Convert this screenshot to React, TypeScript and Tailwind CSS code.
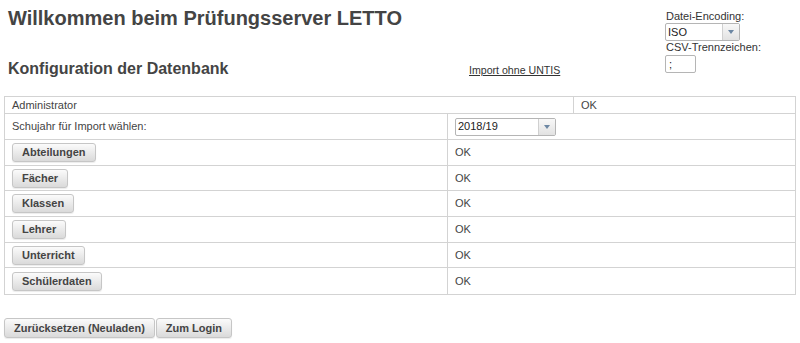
import React from 'react'

const steps = ['Abteilungen', 'Fächer', 'Klassen', 'Lehrer', 'Unterricht', 'Schülerdaten']

function Btn({ label, className = '' }: { label: string; className?: string }) {
  return (
    <button
      type="button"
      className={`bg-linear-to-b from-[#fbfbfb] to-[#dadada] border border-[#c6c6c6] rounded-[3px] px-[9px] text-[11px] font-bold text-[#444] leading-none shadow-[0_1px_1px_rgba(0,0,0,0.08)] ${className}`}
    >
      {label}
    </button>
  )
}

function Select({ value, width }: { value: string; width: string }) {
  return (
    <div className={`relative h-[18px] ${width}`}>
      <select
        defaultValue={value}
        className="appearance-none w-full h-full border border-[#b5b5b5] rounded-[2px] bg-white pl-[2px] text-[11px] text-[#222] leading-none outline-none"
      >
        <option>{value}</option>
      </select>
      <span className="pointer-events-none absolute right-[1px] top-[1px] bottom-[1px] w-[17px] flex items-center justify-center border-l border-[#d0d0d0] bg-linear-to-b from-[#f8f8f8] to-[#e2e2e2]">
        <svg width="6" height="4" viewBox="0 0 6 4">
          <path d="M0 0h6L3 4z" fill="#6c87a3" />
        </svg>
      </span>
    </div>
  )
}

export default function App() {
  return (
    <div className="w-[800px] h-[343px] bg-white text-[#444] font-['Liberation_Sans',Arial,sans-serif] overflow-hidden">
      <div className="flex h-[96px]">
        <div className="w-[665px]">
          <h1 className="mt-[7px] ml-[8px] text-[20px] leading-[23px] font-bold text-[#444]">
            Willkommen beim Prüfungsserver LETTO
          </h1>
          <div className="flex items-baseline mt-[30px]">
            <h2 className="ml-[8px] w-[461px] text-[16px] leading-[18px] font-bold text-[#444]">
              Konfiguration der Datenbank
            </h2>
            <a href="#" className="text-[10.6px] text-[#333] underline">
              Import ohne UNTIS
            </a>
          </div>
        </div>
        <div className="pt-[10px] text-[11px] leading-[13px] text-[#333]">
          <div className="pl-[1px]">Datei-Encoding:</div>
          <Select value="ISO" width="w-[75px]" />
          <div className="pl-[1px]">CSV-Trennzeichen:</div>
          <input
            defaultValue=";"
            className="mt-[1px] w-[31px] h-[18px] border border-[#b5b5b5] rounded-[2px] px-[3px] text-[11px] leading-none text-[#222] outline-none"
          />
        </div>
      </div>

      <div className="ml-[4px] w-[792px] border border-[#d3d3d3] text-[11px] leading-[13px] text-[#444]">
        <div className="flex h-[17px] border-b border-[#d3d3d3]">
          <div className="w-[568px] pl-[7px] flex items-center">Administrator</div>
          <div className="flex-1 border-l border-[#d3d3d3] pl-[7px] flex items-center">OK</div>
        </div>
        <div className="flex h-[26px] border-b border-[#d3d3d3]">
          <div className="w-[442px] pl-[7px] flex items-center">Schujahr für Import wählen:</div>
          <div className="flex-1 border-l border-[#d3d3d3] pl-[7px] flex items-center">
            <Select value="2018/19" width="w-[101px]" />
          </div>
        </div>
        {steps.map((s, i) => (
          <div
            key={s}
            className={`flex h-[25.7px] ${i < steps.length - 1 ? 'border-b border-[#d3d3d3]' : ''}`}
          >
            <div className="w-[442px] pl-[7px] flex items-center">
              <Btn label={s} className="h-[19px]" />
            </div>
            <div className="flex-1 border-l border-[#d3d3d3] pl-[7px] flex items-center">OK</div>
          </div>
        ))}
      </div>

      <div className="flex gap-[1px] ml-[4px] mt-[23px]">
        <Btn label="Zurücksetzen (Neuladen)" className="h-[20px]" />
        <Btn label="Zum Login" className="h-[20px]" />
      </div>
    </div>
  )
}
